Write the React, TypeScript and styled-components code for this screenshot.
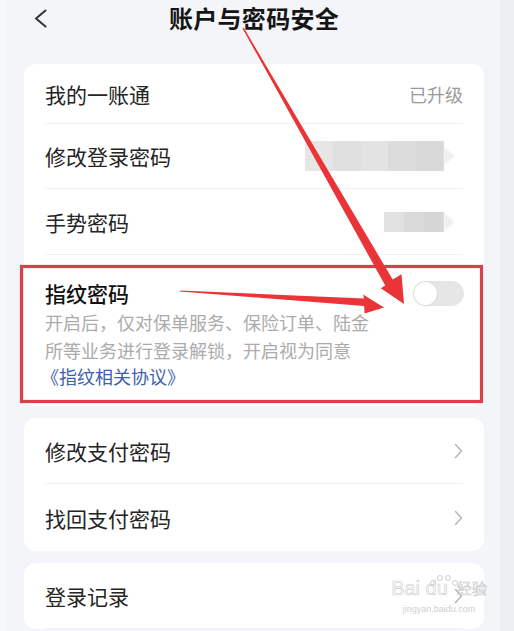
import React from "react";
import styled, { createGlobalStyle } from "styled-components";

const GlobalStyle = createGlobalStyle`
  html, body {
    margin: 0;
    padding: 0;
    background: #eeeff2;
  }
  * {
    box-sizing: border-box;
  }
`;

const Page = styled.div`
  position: relative;
  width: 514px;
  height: 631px;
  overflow: hidden;
  display: flex;
  background: #eeeff2;
  font-family: "Noto Sans CJK SC", "Noto Sans", sans-serif;
`;

const EdgeLeft = styled.div`
  width: 5px;
  background: #f7f8fa;
`;

const Screen = styled.div`
  width: 495px;
  background: #f4f5f8;
  display: flex;
  flex-direction: column;
  padding: 0 16px 0 19px;
`;

const Header = styled.header`
  position: relative;
  height: 36px;
  margin-bottom: 29px;
  display: flex;
  align-items: center;
  justify-content: center;
`;

const BackButton = styled.span`
  position: absolute;
  left: 9px;
  top: 9px;
  display: flex;
`;

const Title = styled.h1`
  margin: 0;
  font-size: 24px;
  font-weight: 700;
  color: #151515;
  letter-spacing: 0.3px;
`;

const Card = styled.section`
  background: #ffffff;
  border-radius: 12px;
  padding: 0 21px;
  margin-bottom: 12px;
`;

const Row = styled.div<{ $h: number; $divider?: boolean }>`
  height: ${(p) => p.$h}px;
  display: flex;
  align-items: center;
  justify-content: space-between;
  border-bottom: ${(p) => (p.$divider ? "1px solid #f1f1f1" : "none")};
`;

const Label = styled.span<{ $strong?: boolean }>`
  font-size: 21px;
  color: ${(p) => (p.$strong ? "#111" : "#242424")};
  font-weight: ${(p) => (p.$strong ? 500 : 400)};
`;

const Value = styled.span`
  font-size: 18px;
  color: #9a9a9a;
`;

const Hidden = styled.div`
  display: flex;
  align-items: center;
  margin-right: 8px;
`;

const Mosaic = styled.div<{ $w: number; $h: number }>`
  width: ${(p) => p.$w}px;
  height: ${(p) => p.$h}px;
  display: flex;
  filter: blur(0.6px);
`;

const Cell = styled.div<{ $tone: string }>`
  flex: 1;
  background: ${(p) => p.$tone};
`;

const FadedArrow = styled.div`
  width: 0;
  height: 0;
  border-top: 9px solid transparent;
  border-bottom: 9px solid transparent;
  border-left: 11px solid #efefef;
  filter: blur(1px);
`;

const Finger = styled.div`
  padding: 23px 0 17px;
  border-top: 1px solid #f1f1f1;
`;

const FingerHead = styled.div`
  height: 30px;
  display: flex;
  align-items: center;
  justify-content: space-between;
`;

const Desc = styled.p`
  margin: 0;
  max-width: 332px;
  font-size: 18px;
  line-height: 28px;
  color: #ababab;
`;

const Protocol = styled.span`
  display: block;
  margin-left: -4px;
  font-size: 18px;
  line-height: 25px;
  color: #3e5fae;
`;

const Toggle = styled.span`
  position: relative;
  width: 51px;
  height: 25px;
  border-radius: 13px;
  background: #e6e6e6;
  margin-right: -1px;
`;

const Knob = styled.span`
  position: absolute;
  left: 1px;
  top: 1px;
  width: 23px;
  height: 23px;
  border-radius: 50%;
  background: #ffffff;
  box-shadow: 0 0 2px rgba(0, 0, 0, 0.15);
`;

const Overlay = styled.svg`
  position: absolute;
  left: 0;
  top: 0;
  pointer-events: none;
`;

const Watermark = styled.div`
  position: absolute;
  left: 392px;
  top: 577px;
  width: 94px;
  display: flex;
  flex-direction: column;
  align-items: center;
  color: rgba(200, 200, 200, 0.9);
  pointer-events: none;
  white-space: nowrap;
  font-family: "Liberation Sans", sans-serif;
`;

const MarkLine = styled.div`
  display: flex;
  align-items: center;
  gap: 1px;
  font-size: 20px;
  line-height: 22px;
  -webkit-text-stroke: 0.6px rgba(185, 185, 185, 0.8);
  color: rgba(255, 255, 255, 0.6);
`;

const MarkCn = styled.span`
  font-family: "Noto Sans CJK SC", sans-serif;
  font-size: 15px;
  line-height: 20px;
  margin-left: 8px;
`;

const MarkUrl = styled.div`
  font-size: 9px;
  line-height: 12px;
  margin-top: 4px;
`;

function Chevron() {
  return (
    <svg width="9" height="16" viewBox="0 0 9 16">
      <polyline
        points="1.5,1.5 7.5,8 1.5,14.5"
        fill="none"
        stroke="#b4b4b4"
        strokeWidth="1.4"
        strokeLinecap="round"
        strokeLinejoin="round"
      />
    </svg>
  );
}

function Blurred({ width, height }: { width: number; height: number }) {
  const tones = ["#e6e6e6", "#e0e0e0", "#e3e3e3", "#dbdbdb", "#d9d9d9"];
  const used = width > 100 ? tones : ["#e1e1e1", "#dadada", "#d6d6d6"];
  return (
    <Hidden>
      <Mosaic $w={width} $h={height}>
        {used.map((t, i) => (
          <Cell key={i} $tone={t} />
        ))}
      </Mosaic>
      <FadedArrow />
    </Hidden>
  );
}

function Annotations() {
  return (
    <Overlay width="514" height="631" viewBox="0 0 514 631">
      <rect
        x="21.5"
        y="266.5"
        width="460"
        height="135"
        fill="none"
        stroke="#d9414a"
        strokeWidth="3.2"
      />
      {/* long arrow from the title down to the switch */}
      <polygon
        points="242.6,28.3 243.6,27.7 392.7,279.5 401.5,274.2 404,304 380.8,288.2 388.9,283.2 386.6,285"
        fill="#ea3437"
      />
      <polygon points="242.6,28.3 243.6,27.7 390,283 385.5,286" fill="#ea3437" />
      {/* short arrow pointing at the switch */}
      <polygon
        points="180,291.5 180.2,290.5 364,298.4 363,294.5 384,307.5 364.6,313.5 364.2,306"
        fill="#ea3437"
      />
      {/* paw of the watermark */}
      <g fill="none" stroke="rgba(190,190,190,0.75)" strokeWidth="1">
        <circle cx="433" cy="583" r="2.5" />
        <circle cx="440" cy="578" r="2.5" />
        <circle cx="448" cy="578" r="2.5" />
        <circle cx="455" cy="583" r="2.5" />
      </g>
    </Overlay>
  );
}

export default function App() {
  return (
    <>
      <GlobalStyle />
      <Page>
        <EdgeLeft />
        <Screen>
          <Header>
            <BackButton>
              <svg width="15" height="19" viewBox="0 0 15 19">
                <polyline
                  points="12.5,1.5 3,9.5 12.5,17.5"
                  fill="none"
                  stroke="#333"
                  strokeWidth="2"
                  strokeLinecap="round"
                  strokeLinejoin="round"
                />
              </svg>
            </BackButton>
            <Title>账户与密码安全</Title>
          </Header>

          <Card>
            <Row $h={60} $divider>
              <Label>我的一账通</Label>
              <Value>已升级</Value>
            </Row>
            <Row $h={65} $divider>
              <Label>修改登录密码</Label>
              <Blurred width={139} height={30} />
            </Row>
            <Row $h={65}>
              <Label>手势密码</Label>
              <Blurred width={60} height={20} />
            </Row>
            <Finger>
              <FingerHead>
                <Label $strong>指纹密码</Label>
                <Toggle>
                  <Knob />
                </Toggle>
              </FingerHead>
              <Desc>
                开启后，仅对保单服务、保险订单、陆金所等业务进行登录解锁，开启视为同意
                <Protocol>《指纹相关协议》</Protocol>
              </Desc>
            </Finger>
          </Card>

          <Card>
            <Row $h={66} $divider>
              <Label>修改支付密码</Label>
              <Chevron />
            </Row>
            <Row $h={67}>
              <Label>找回支付密码</Label>
              <Chevron />
            </Row>
          </Card>

          <Card>
            <Row $h={66} $divider>
              <Label>登录记录</Label>
              <Chevron />
            </Row>
          </Card>
        </Screen>

        <Annotations />
        <Watermark>
          <MarkLine>
            Bai du
            <MarkCn>经验</MarkCn>
          </MarkLine>
          <MarkUrl>jingyan.baidu.com</MarkUrl>
        </Watermark>
      </Page>
    </>
  );
}
